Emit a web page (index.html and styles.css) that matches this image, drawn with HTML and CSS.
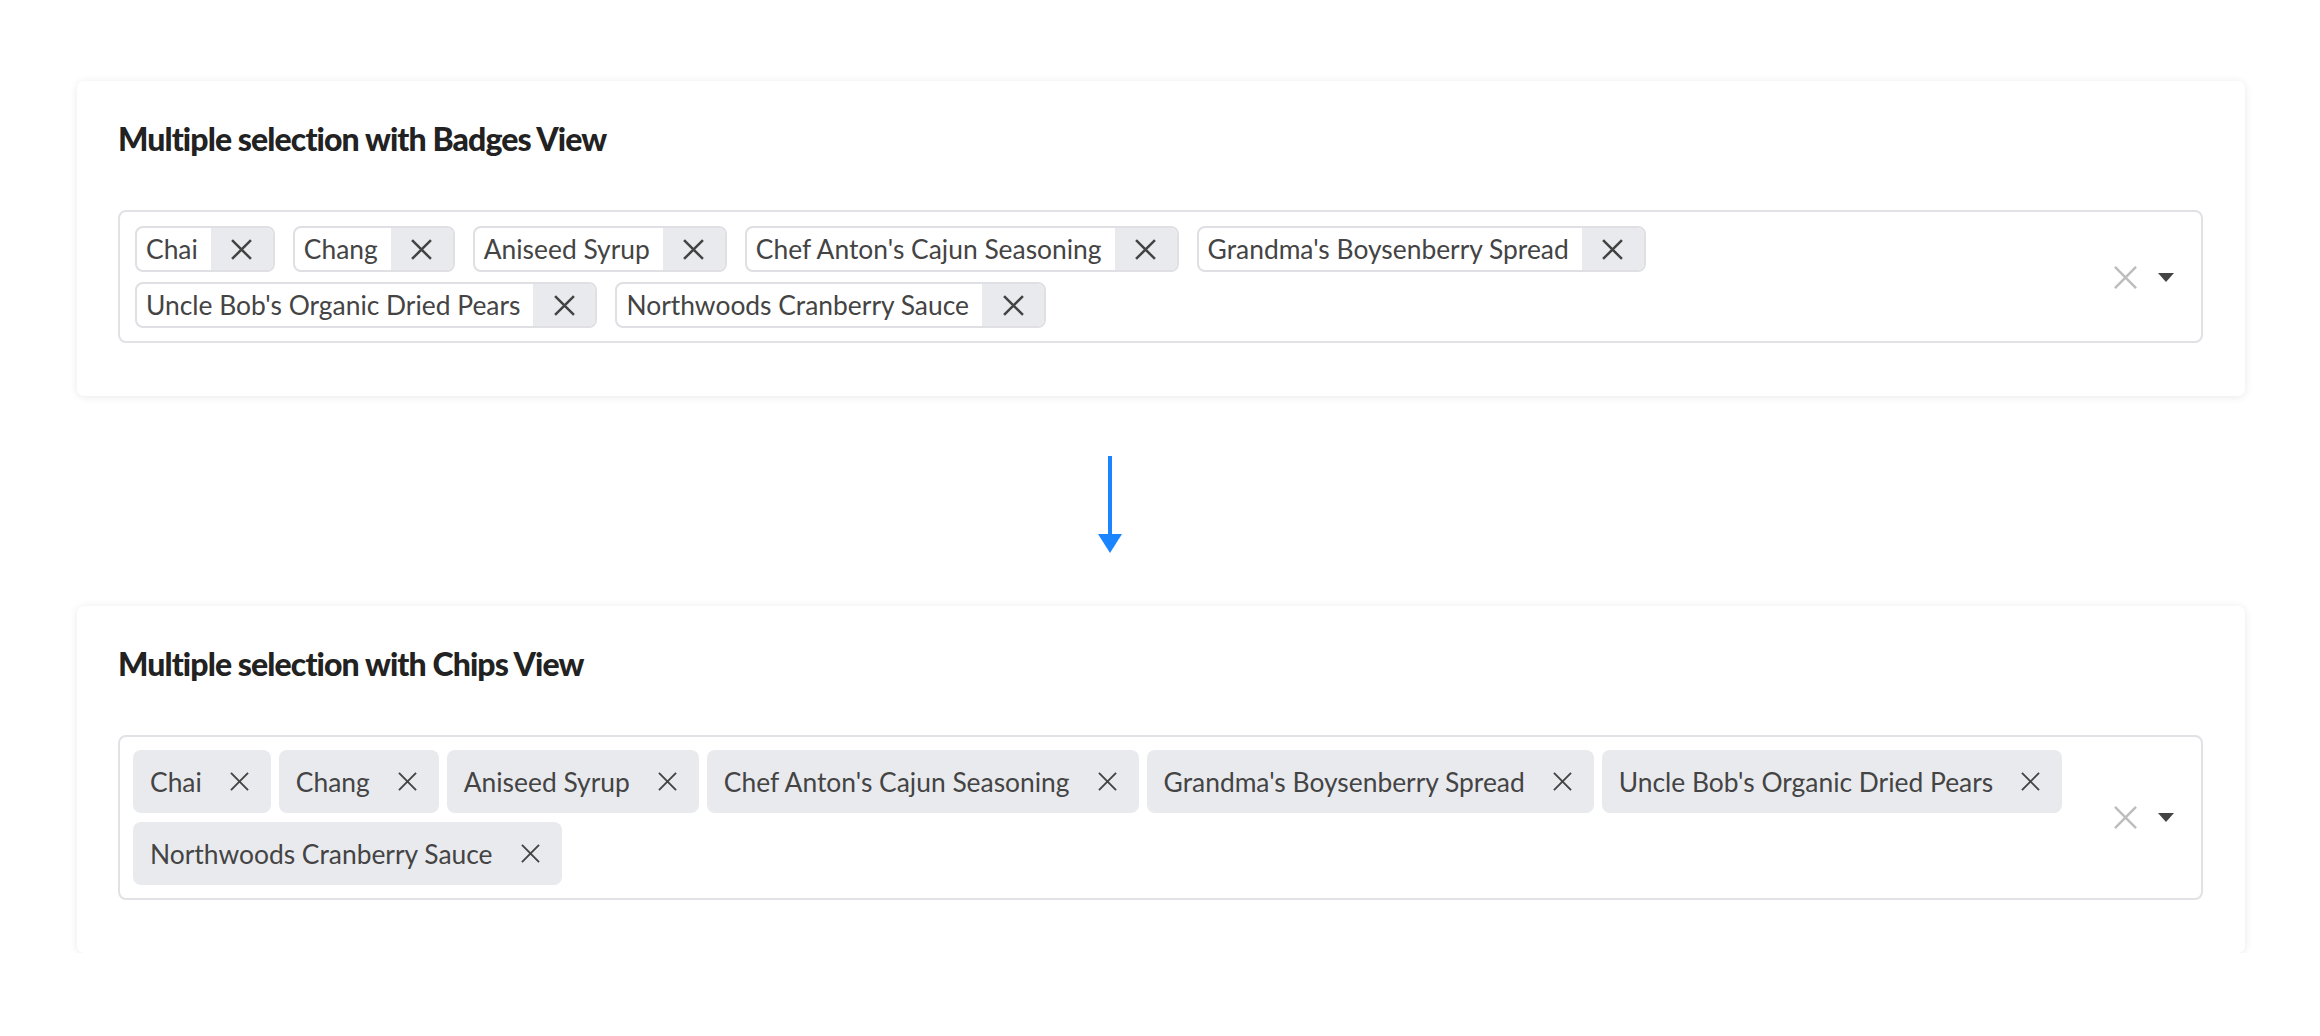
FILE: index.html
```html
<!DOCTYPE html>
<html lang="en">
<head>
    <meta charset="UTF-8">
    <meta name="viewport" content="width=device-width, initial-scale=1.0">
    <title>Multiple selection views</title>
    <link rel="stylesheet" href="styles.css">
</head>
<body>
    <div class="page">
        <section class="card">
            <h2 class="card-title">Multiple selection with Badges View</h2>
            <div class="multiselect">
                <div class="tags badges">
                    <span class="badge"><span class="badge-text">Chai</span><span class="badge-remove"><svg viewBox="0 0 20 20"><path d="M1 1L19 19M19 1L1 19"/></svg></span></span>
                    <span class="badge"><span class="badge-text">Chang</span><span class="badge-remove"><svg viewBox="0 0 20 20"><path d="M1 1L19 19M19 1L1 19"/></svg></span></span>
                    <span class="badge"><span class="badge-text">Aniseed Syrup</span><span class="badge-remove"><svg viewBox="0 0 20 20"><path d="M1 1L19 19M19 1L1 19"/></svg></span></span>
                    <span class="badge"><span class="badge-text">Chef Anton's Cajun Seasoning</span><span class="badge-remove"><svg viewBox="0 0 20 20"><path d="M1 1L19 19M19 1L1 19"/></svg></span></span>
                    <span class="badge"><span class="badge-text">Grandma's Boysenberry Spread</span><span class="badge-remove"><svg viewBox="0 0 20 20"><path d="M1 1L19 19M19 1L1 19"/></svg></span></span>
                    <span class="badge"><span class="badge-text">Uncle Bob's Organic Dried Pears</span><span class="badge-remove"><svg viewBox="0 0 20 20"><path d="M1 1L19 19M19 1L1 19"/></svg></span></span>
                    <span class="badge"><span class="badge-text">Northwoods Cranberry Sauce</span><span class="badge-remove"><svg viewBox="0 0 20 20"><path d="M1 1L19 19M19 1L1 19"/></svg></span></span>
                </div>
                <div class="actions">
                    <svg class="clear-icon" viewBox="0 0 24 24"><path d="M1 1L23 23M23 1L1 23"/></svg>
                    <svg class="caret-icon" viewBox="0 0 16 9"><path d="M0 0H16L8 9Z"/></svg>
                </div>
            </div>
        </section>

        <div class="flow-arrow">
            <svg viewBox="0 0 24 98"><rect x="10" y="0" width="4" height="80"/><path d="M0 78H24L12 97Z"/></svg>
        </div>

        <section class="card">
            <h2 class="card-title">Multiple selection with Chips View</h2>
            <div class="multiselect chips-box">
                <div class="tags chips">
                    <span class="chip">Chai<svg viewBox="0 0 20 20"><path d="M1 1L19 19M19 1L1 19"/></svg></span>
                    <span class="chip">Chang<svg viewBox="0 0 20 20"><path d="M1 1L19 19M19 1L1 19"/></svg></span>
                    <span class="chip">Aniseed Syrup<svg viewBox="0 0 20 20"><path d="M1 1L19 19M19 1L1 19"/></svg></span>
                    <span class="chip">Chef Anton's Cajun Seasoning<svg viewBox="0 0 20 20"><path d="M1 1L19 19M19 1L1 19"/></svg></span>
                    <span class="chip">Grandma's Boysenberry Spread<svg viewBox="0 0 20 20"><path d="M1 1L19 19M19 1L1 19"/></svg></span>
                    <span class="chip">Uncle Bob's Organic Dried Pears<svg viewBox="0 0 20 20"><path d="M1 1L19 19M19 1L1 19"/></svg></span>
                    <span class="chip">Northwoods Cranberry Sauce<svg viewBox="0 0 20 20"><path d="M1 1L19 19M19 1L1 19"/></svg></span>
                </div>
                <div class="actions">
                    <svg class="clear-icon" viewBox="0 0 24 24"><path d="M1 1L23 23M23 1L1 23"/></svg>
                    <svg class="caret-icon" viewBox="0 0 16 9"><path d="M0 0H16L8 9Z"/></svg>
                </div>
            </div>
        </section>
    </div>
</body>
</html>
```

FILE: styles.css
```css
body { margin: 0; background: #fff; font-family: Lato, "Noto Sans", sans-serif; color: #444; }
.page { width: 2168px; padding: 81px 0 0 77px; }
.card { background: #fff; border-radius: 7px; box-shadow: 0 1px 8px rgba(0, 0, 0, 0.09); padding: 31px 42px 53px 41px; }
.card-title { margin: 0 0 44px; font-size: 32px; line-height: 54px; font-weight: 900; color: #222; letter-spacing: -0.9px; }

.multiselect { display: flex; align-items: center; border: 2px solid #e1e1e6; border-radius: 8px; padding: 14px 0 13px 15px; }
.tags { flex: 1; display: flex; flex-wrap: wrap; }
.actions { display: flex; align-items: center; gap: 21px; padding: 0 27px 0 24px; }
.clear-icon { width: 23px; height: 23px; fill: none; stroke: #bdbdbd; stroke-width: 2.6; }
.caret-icon { width: 16px; height: 9px; fill: #444; }

.badges { column-gap: 18px; row-gap: 10px; }
.badge { display: flex; height: 42px; border: 2px solid #dfdfe4; border-radius: 8px; font-size: 26.4px; line-height: 42px; overflow: hidden; }
.badge-text { padding: 0 13px 0 9px; }
.badge-remove { display: flex; align-items: center; justify-content: center; width: 62px; background: #e9eaee; }
.badge-remove svg { width: 21px; height: 21px; fill: none; stroke: #444; stroke-width: 2.4; }

.chips-box { padding: 13px 0 13px 13px; }
.chips { column-gap: 8px; row-gap: 9px; }
.chip { display: flex; align-items: center; gap: 28px; height: 63px; padding: 0 22px 0 17px; background: #e9eaee; border-radius: 8px; font-size: 26.4px; }
.chip svg { width: 19px; height: 19px; fill: none; stroke: #444; stroke-width: 2; }

.flow-arrow { height: 210px; display: flex; align-items: center; padding-left: 1021px; }
.flow-arrow svg { width: 24px; height: 98px; fill: #1a85ff; margin-top: 8px; }
```
